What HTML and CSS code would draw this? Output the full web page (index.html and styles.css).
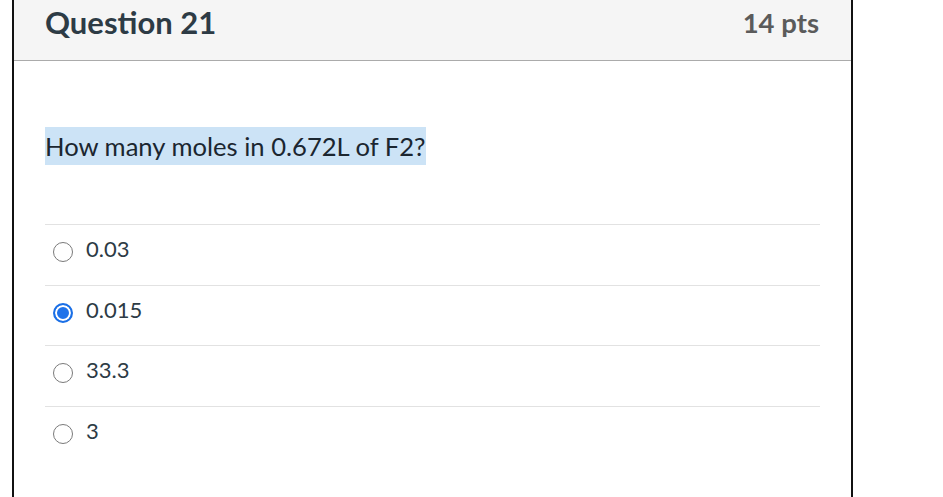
FILE: index.html
```html
<!DOCTYPE html>
<html>
<head>
<meta charset="utf-8">
<link rel="stylesheet" href="styles.css">
</head>
<body>
<div class="card">
  <div class="header">
    <h2 class="title">Question 21</h2>
    <div class="pts">14 pts</div>
  </div>
  <div class="body">
    <div class="question"><span class="hl">How many moles in 0.672L of F2?</span></div>
    <div class="answers">
      <div class="answer"><span class="radio"></span><span class="label">0.03</span></div>
      <div class="answer"><span class="radio checked"></span><span class="label">0.015</span></div>
      <div class="answer"><span class="radio"></span><span class="label">33.3</span></div>
      <div class="answer"><span class="radio"></span><span class="label">3</span></div>
    </div>
  </div>
</div>
</body>
</html>
```

FILE: styles.css
```css
html, body {
  margin: 0;
  padding: 0;
  background: #ffffff;
  font-family: Lato, "Liberation Sans", sans-serif;
}
.card {
  margin-left: 12px;
  width: 837px;
  height: 497px;
  border-left: 2px solid #111;
  border-right: 2px solid #111;
  box-sizing: content-box;
  overflow: hidden;
}
.header {
  height: 61px;
  background: #f5f5f5;
  border-bottom: 1px solid #ababab;
  box-sizing: border-box;
  display: flex;
  align-items: center;
  justify-content: space-between;
  padding: 0 32px 0 31px;
}
.title {
  margin: 0;
  font-size: 31px;
  font-weight: 700;
  color: #2d3b45;
  padding-bottom: 16px;
}
.pts {
  font-size: 27.5px;
  font-weight: 700;
  color: #5b5b5b;
  padding-bottom: 16px;
}
.body {
  padding: 0 31px;
}
.question {
  padding-top: 66px;
  padding-bottom: 59px;
  line-height: 0;
}
.hl {
  display: inline-block;
  background: #cce3f6;
  font-size: 25.6px;
  line-height: 38px;
  color: #1b2630;
}
.answers {
  display: flex;
  flex-direction: column;
}
.answer {
  height: 60.7px;
  border-top: 1px solid #e2e2e2;
  box-sizing: border-box;
  display: flex;
  align-items: flex-start;
  padding-left: 8px;
}
.radio {
  width: 20px;
  height: 20px;
  border-radius: 50%;
  border: 1px solid #7a7a7a;
  box-sizing: border-box;
  background: #fff;
  flex: none;
  margin-top: 17px;
}
.radio.checked {
  border: 2px solid #1a6fe6;
  background: #1f72ea;
  box-shadow: inset 0 0 0 2px #fff;
}
.label {
  margin-left: 13px;
  margin-top: 11px;
  font-size: 22px;
  line-height: 26px;
  color: #2d3b45;
}
```
